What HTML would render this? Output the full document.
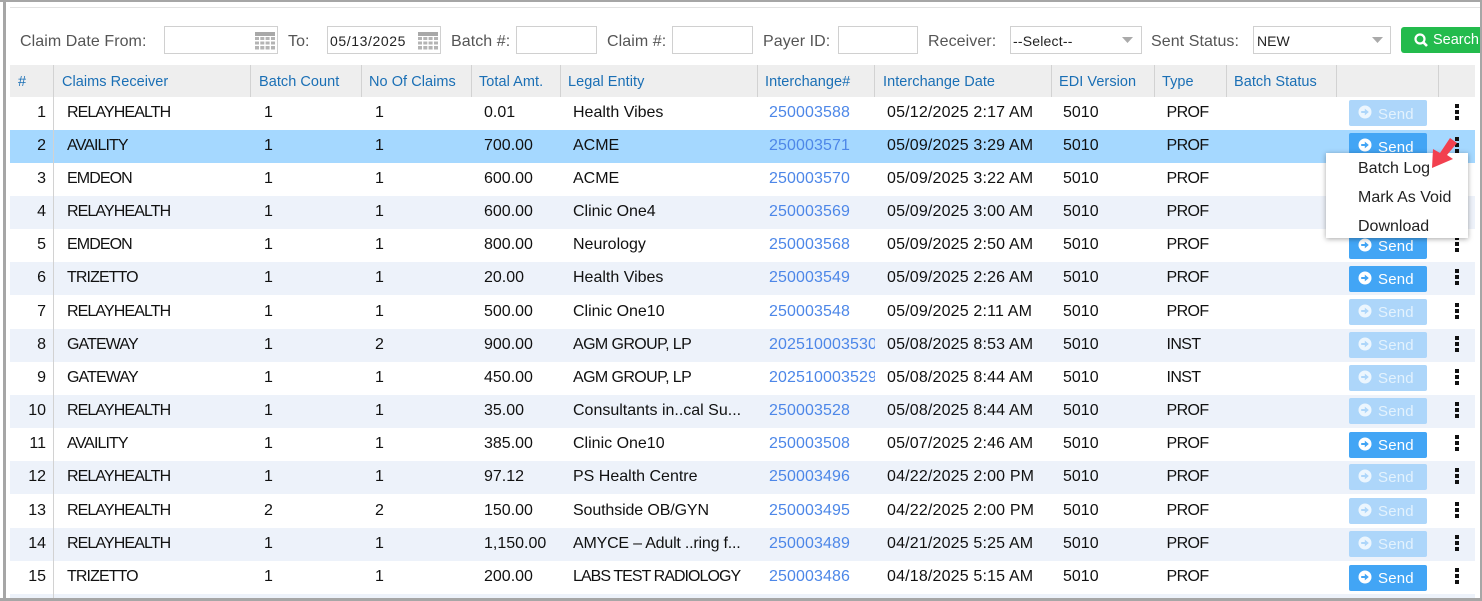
<!DOCTYPE html>
<html><head><meta charset="utf-8"><style>
html,body{margin:0;padding:0;background:#fff}
#p{position:relative;width:1482px;height:601px;overflow:hidden;background:#fff;font-family:"Liberation Sans",sans-serif;font-size:16px;color:#111}
#p div,#p span{position:absolute;white-space:nowrap}
.fr{position:absolute;background:#a6a6a6}
.l{top:32px;line-height:20px;color:#555;font-size:16px;letter-spacing:.07px}
.i{top:26px;height:26px;border:1px solid #d0d0d0;background:#fff;box-sizing:content-box;color:#222;font-size:14px;line-height:29px;text-indent:2px}
.h{top:65px;height:32px;line-height:34px;font-size:14.5px;letter-spacing:.05px;color:#1a6fb5}
.s{top:65px;height:32px;width:1px;background:#d2d2d2}
.r{left:10px;width:1465px;height:33px}
.a{background:#edf2fa}.sel{background:#a5d8ff}
.r span{top:0;line-height:31px}
.n{right:1429px;left:auto;text-align:right}
.c1{left:57px;letter-spacing:-.9px}.c2{left:254px}.c3{left:365px}.c4{left:474px}.c5{left:563px}
.c6{left:759px;width:106px;overflow:hidden;color:#4d87e8;letter-spacing:.1px}
.c7{left:877px;letter-spacing:.17px}.c8{left:1053px}.c9{left:1156.500px;letter-spacing:-.6px}
.b{left:1339px;top:3px!important;width:78px;height:26px;line-height:27px!important;background:#42a5f5;border-radius:2px;color:#fff;font-size:15px;text-indent:29px;letter-spacing:.2px}
.d{background:#add6fa;line-height:26px!important}
.r .d span{line-height:28px}
.t4{top:4px!important}
.b svg{position:absolute;left:9px;top:5px}
.v{position:absolute;left:1445px;top:7px}
.m{position:absolute;left:1348px;font-size:16px;color:#222;line-height:20px}
</style></head><body><div id="p">
<svg width="0" height="0" style="position:absolute"><defs>
<symbol id="go" viewBox="0 0 14 14"><circle cx="7" cy="7" r="6.500" fill="#fff"/><path d="M3.200 6h3.600V3.600L10.800 7 6.800 10.400V8H3.200z" fill="#42a5f5"/></symbol>
<symbol id="gd" viewBox="0 0 14 14"><circle cx="7" cy="7" r="6.500" fill="#ecf6fe"/><path d="M3.200 6h3.600V3.600L10.800 7 6.800 10.400V8H3.200z" fill="#add6fa"/></symbol>
<symbol id="dt" viewBox="0 0 5 16"><rect x="0" y="0" width="4" height="4" fill="#111"/><rect x="0" y="6" width="4" height="4" fill="#111"/><rect x="0" y="12" width="4" height="4" fill="#111"/></symbol>
<symbol id="cal" viewBox="0 0 20 18"><rect width="20" height="4" fill="#a8a8a8"/><g fill="#b4b4b4"><rect y="5" width="4" height="3"/><rect x="5.300" y="5" width="4" height="3"/><rect x="10.600" y="5" width="4" height="3"/><rect x="16" y="5" width="4" height="3"/><rect y="9.500" width="4" height="3"/><rect x="5.300" y="9.500" width="4" height="3"/><rect x="10.600" y="9.500" width="4" height="3"/><rect x="16" y="9.500" width="4" height="3"/><rect y="14" width="4" height="3.500"/><rect x="5.300" y="14" width="4" height="3.500"/><rect x="10.600" y="14" width="4" height="3.500"/><rect x="16" y="14" width="4" height="3.500"/></g></symbol>
</defs></svg>

<div style="left:10px;top:7px;width:1470px;height:1px;background:#e2e2e2"></div>

<div class="l" style="left:20px">Claim Date From:</div>
<div class="i" style="left:164px;width:112px"></div>
<svg width="20" height="18" style="position:absolute;left:255px;top:32px"><use href="#cal"/></svg>
<div class="l" style="left:288px">To:</div>
<div class="i" style="left:327px;width:112px;letter-spacing:.6px">05/13/2025</div>
<svg width="20" height="18" style="position:absolute;left:418px;top:32px"><use href="#cal"/></svg>
<div class="l" style="left:451px">Batch #:</div>
<div class="i" style="left:516px;width:79px"></div>
<div class="l" style="left:607px">Claim #:</div>
<div class="i" style="left:672px;width:79px"></div>
<div class="l" style="left:763px">Payer ID:</div>
<div class="i" style="left:838px;width:78px"></div>
<div class="l" style="left:928px">Receiver:</div>
<div class="i" style="left:1010px;width:130px;text-indent:2px;letter-spacing:.2px">--Select--</div>
<svg width="11" height="6" style="position:absolute;left:1122px;top:37px"><path d="M0 0h11L5.500 6z" fill="#aaa"/></svg>
<div class="l" style="left:1151px">Sent Status:</div>
<div class="i" style="left:1253px;width:136px;text-indent:3px">NEW</div>
<svg width="11" height="6" style="position:absolute;left:1372px;top:37px"><path d="M0 0h11L5.500 6z" fill="#aaa"/></svg>
<div style="left:1401px;top:27px;width:79px;height:26px;background:#23bb4d;border-radius:3px 0 0 3px;color:#fff;font-size:14.500px;line-height:27px;text-indent:32px;overflow:hidden">Search<svg width="14" height="14" style="position:absolute;left:13px;top:6px"><circle cx="6" cy="6" r="4.500" fill="none" stroke="#fff" stroke-width="2.200"/><path d="M9.200 9.200L13 13" stroke="#fff" stroke-width="2.600"/></svg></div>

<div style="left:10px;top:65px;width:1465px;height:32px;background:#eee"></div>
<div class="s" style="left:53px"></div><div class="s" style="left:250px"></div><div class="s" style="left:361px"></div><div class="s" style="left:471px"></div><div class="s" style="left:560px"></div><div class="s" style="left:757px"></div><div class="s" style="left:874px"></div><div class="s" style="left:1051px"></div><div class="s" style="left:1154px"></div><div class="s" style="left:1226px"></div><div class="s" style="left:1336px"></div><div class="s" style="left:1438px"></div>
<div class="h" style="left:18px">#</div><div class="h" style="left:62px">Claims Receiver</div><div class="h" style="left:259px">Batch Count</div><div class="h" style="left:369px">No Of Claims</div><div class="h" style="left:479px">Total Amt.</div><div class="h" style="left:568px">Legal Entity</div><div class="h" style="left:765px">Interchange#</div><div class="h" style="left:883px">Interchange Date</div><div class="h" style="left:1059px">EDI Version</div><div class="h" style="left:1162px">Type</div><div class="h" style="left:1234px">Batch Status</div>

<div class="r" style="top:97px"><span class="n">1</span><span class="c1">RELAYHEALTH</span><span class="c2">1</span><span class="c3">1</span><span class="c4">0.01</span><span class="c5">Health Vibes</span><span class="c6">250003588</span><span class="c7">05/12/2025 2:17 AM</span><span class="c8">5010</span><span class="c9">PROF</span><span class="b d"><svg width="14" height="14"><use href="#gd"/></svg><span style="position:static;color:#e3f2fd;line-height:29px">Send</span></span><svg class="v" width="5" height="16"><use href="#dt"/></svg></div>
<div class="r sel" style="top:130px"><span class="n">2</span><span class="c1">AVAILITY</span><span class="c2">1</span><span class="c3">1</span><span class="c4">700.00</span><span class="c5">ACME</span><span class="c6">250003571</span><span class="c7">05/09/2025 3:29 AM</span><span class="c8">5010</span><span class="c9">PROF</span><span class="b" style="line-height:29px!important"><svg width="14" height="14"><use href="#go"/></svg>Send</span><svg class="v" width="5" height="16"><use href="#dt"/></svg></div>
<div class="r" style="top:163px"><span class="n">3</span><span class="c1">EMDEON</span><span class="c2">1</span><span class="c3">1</span><span class="c4">600.00</span><span class="c5">ACME</span><span class="c6">250003570</span><span class="c7">05/09/2025 3:22 AM</span><span class="c8">5010</span><span class="c9">PROF</span></div>
<div class="r a" style="top:196px"><span class="n">4</span><span class="c1">RELAYHEALTH</span><span class="c2">1</span><span class="c3">1</span><span class="c4">600.00</span><span class="c5">Clinic One4</span><span class="c6">250003569</span><span class="c7">05/09/2025 3:00 AM</span><span class="c8">5010</span><span class="c9">PROF</span></div>
<div class="r" style="top:229px"><span class="n">5</span><span class="c1">EMDEON</span><span class="c2">1</span><span class="c3">1</span><span class="c4">800.00</span><span class="c5">Neurology</span><span class="c6">250003568</span><span class="c7">05/09/2025 2:50 AM</span><span class="c8">5010</span><span class="c9">PROF</span><span class="b t4"><svg width="14" height="14"><use href="#go"/></svg>Send</span><svg class="v" width="5" height="16"><use href="#dt"/></svg></div>
<div class="r a" style="top:262px"><span class="n">6</span><span class="c1">TRIZETTO</span><span class="c2">1</span><span class="c3">1</span><span class="c4">20.00</span><span class="c5">Health Vibes</span><span class="c6">250003549</span><span class="c7">05/09/2025 2:26 AM</span><span class="c8">5010</span><span class="c9">PROF</span><span class="b t4"><svg width="14" height="14"><use href="#go"/></svg>Send</span><svg class="v" width="5" height="16"><use href="#dt"/></svg></div>
<div class="r" style="top:296px"><span class="n">7</span><span class="c1">RELAYHEALTH</span><span class="c2">1</span><span class="c3">1</span><span class="c4">500.00</span><span class="c5">Clinic One10</span><span class="c6">250003548</span><span class="c7">05/09/2025 2:11 AM</span><span class="c8">5010</span><span class="c9">PROF</span><span class="b d"><svg width="14" height="14"><use href="#gd"/></svg><span style="position:static;color:#e3f2fd">Send</span></span><svg class="v" width="5" height="16"><use href="#dt"/></svg></div>
<div class="r a" style="top:329px"><span class="n">8</span><span class="c1">GATEWAY</span><span class="c2">1</span><span class="c3">2</span><span class="c4">900.00</span><span class="c5" style="letter-spacing:-.6px">AGM GROUP, LP</span><span class="c6">202510003530</span><span class="c7">05/08/2025 8:53 AM</span><span class="c8">5010</span><span class="c9">INST</span><span class="b d"><svg width="14" height="14"><use href="#gd"/></svg><span style="position:static;color:#e3f2fd">Send</span></span><svg class="v" width="5" height="16"><use href="#dt"/></svg></div>
<div class="r" style="top:362px"><span class="n">9</span><span class="c1">GATEWAY</span><span class="c2">1</span><span class="c3">1</span><span class="c4">450.00</span><span class="c5" style="letter-spacing:-.6px">AGM GROUP, LP</span><span class="c6">202510003529</span><span class="c7">05/08/2025 8:44 AM</span><span class="c8">5010</span><span class="c9">INST</span><span class="b d"><svg width="14" height="14"><use href="#gd"/></svg><span style="position:static;color:#e3f2fd">Send</span></span><svg class="v" width="5" height="16"><use href="#dt"/></svg></div>
<div class="r a" style="top:395px"><span class="n">10</span><span class="c1">RELAYHEALTH</span><span class="c2">1</span><span class="c3">1</span><span class="c4">35.00</span><span class="c5">Consultants in..cal Su...</span><span class="c6">250003528</span><span class="c7">05/08/2025 8:44 AM</span><span class="c8">5010</span><span class="c9">PROF</span><span class="b d"><svg width="14" height="14"><use href="#gd"/></svg><span style="position:static;color:#e3f2fd">Send</span></span><svg class="v" width="5" height="16"><use href="#dt"/></svg></div>
<div class="r" style="top:428px"><span class="n">11</span><span class="c1">AVAILITY</span><span class="c2">1</span><span class="c3">1</span><span class="c4">385.00</span><span class="c5">Clinic One10</span><span class="c6">250003508</span><span class="c7">05/07/2025 2:46 AM</span><span class="c8">5010</span><span class="c9">PROF</span><span class="b t4"><svg width="14" height="14"><use href="#go"/></svg>Send</span><svg class="v" width="5" height="16"><use href="#dt"/></svg></div>
<div class="r a" style="top:461px"><span class="n">12</span><span class="c1">RELAYHEALTH</span><span class="c2">1</span><span class="c3">1</span><span class="c4">97.12</span><span class="c5">PS Health Centre</span><span class="c6">250003496</span><span class="c7">04/22/2025 2:00 PM</span><span class="c8">5010</span><span class="c9">PROF</span><span class="b d"><svg width="14" height="14"><use href="#gd"/></svg><span style="position:static;color:#e3f2fd">Send</span></span><svg class="v" width="5" height="16"><use href="#dt"/></svg></div>
<div class="r" style="top:495px"><span class="n">13</span><span class="c1">RELAYHEALTH</span><span class="c2">2</span><span class="c3">2</span><span class="c4">150.00</span><span class="c5" style="letter-spacing:-.12px">Southside OB/GYN</span><span class="c6">250003495</span><span class="c7">04/22/2025 2:00 PM</span><span class="c8">5010</span><span class="c9">PROF</span><span class="b d"><svg width="14" height="14"><use href="#gd"/></svg><span style="position:static;color:#e3f2fd">Send</span></span><svg class="v" width="5" height="16"><use href="#dt"/></svg></div>
<div class="r a" style="top:528px"><span class="n">14</span><span class="c1">RELAYHEALTH</span><span class="c2">1</span><span class="c3">1</span><span class="c4">1,150.00</span><span class="c5" style="letter-spacing:-.2px">AMYCE – Adult ..ring f...</span><span class="c6">250003489</span><span class="c7">04/21/2025 5:25 AM</span><span class="c8">5010</span><span class="c9">PROF</span><span class="b d"><svg width="14" height="14"><use href="#gd"/></svg><span style="position:static;color:#e3f2fd">Send</span></span><svg class="v" width="5" height="16"><use href="#dt"/></svg></div>
<div class="r" style="top:561px"><span class="n">15</span><span class="c1">TRIZETTO</span><span class="c2">1</span><span class="c3">1</span><span class="c4">200.00</span><span class="c5" style="letter-spacing:-.95px">LABS TEST RADIOLOGY</span><span class="c6">250003486</span><span class="c7">04/18/2025 5:15 AM</span><span class="c8">5010</span><span class="c9">PROF</span><span class="b t4"><svg width="14" height="14"><use href="#go"/></svg>Send</span><svg class="v" width="5" height="16"><use href="#dt"/></svg></div>
<div class="r a" style="top:594px;height:7px"></div>
<div style="left:1349px;top:598px;width:78px;height:3px;background:#add6fa"></div>
<div style="left:53px;top:97px;width:1px;height:504px;background:#d2d2d2"></div>

<div style="left:1326px;top:153px;width:142px;height:85px;background:#fff;box-shadow:0 1px 5px rgba(0,0,0,.35)">
<span class="m" style="left:32px;top:6px">Batch Log</span>
<span class="m" style="left:32px;top:35px">Mark As Void</span>
<span class="m" style="left:32px;top:64px">Download</span>
</div>
<svg width="40" height="40" style="position:absolute;left:1425px;top:135px"><path d="M25 3L32 8L22 20L28 24L7 33L8 14L15 18z" fill="#f2404f"/></svg>

<div class="fr" style="left:0;top:0;width:1482px;height:2px"></div>
<div class="fr" style="left:3px;top:0;width:3px;height:601px"></div>
<div class="fr" style="left:0;top:598px;width:1482px;height:3px"></div>
<div style="left:0;top:2px;width:3px;height:596px;background:#fff"></div>
<div class="fr" style="left:1480px;top:0;width:2px;height:601px"></div>
</div></body></html>
